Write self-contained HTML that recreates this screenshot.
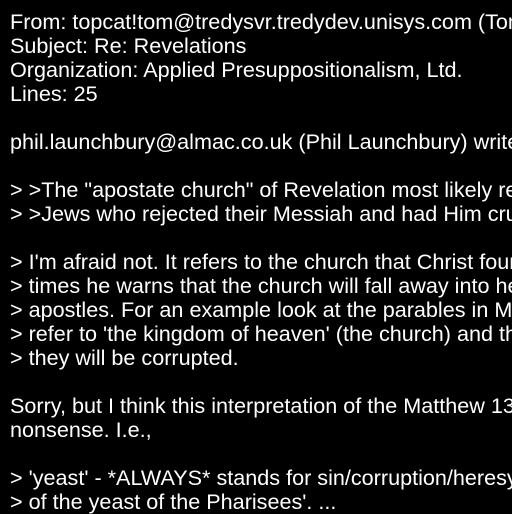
<!DOCTYPE html>
<html><head><meta charset="utf-8"><style>
html,body{margin:0;padding:0;background:#000;width:512px;height:512px;overflow:hidden}
pre{margin:0;position:absolute;left:10px;top:10px;color:#fff;font-family:"Liberation Sans",Arial,sans-serif;font-size:21.6px;line-height:24px;white-space:pre}
</style></head><body><pre>From: topcat!tom@tredysvr.tredydev.unisys.com (Tom
Subject: Re: Revelations
Organization: Applied Presuppositionalism, Ltd.
Lines: 25

phil.launchbury@almac.co.uk (Phil Launchbury) writes:

&gt; &gt;The "apostate church" of Revelation most likely refers
&gt; &gt;Jews who rejected their Messiah and had Him crucified

&gt; I'm afraid not. It refers to the church that Christ founded
&gt; times he warns that the church will fall away into heresy
&gt; apostles. For an example look at the parables in Matthew
&gt; refer to 'the kingdom of heaven' (the church) and that
&gt; they will be corrupted.

Sorry, but I think this interpretation of the Matthew 13
nonsense. I.e.,

&gt; 'yeast' - *ALWAYS* stands for sin/corruption/heresy
&gt; of the yeast of the Pharisees'. ...</pre></body></html>
